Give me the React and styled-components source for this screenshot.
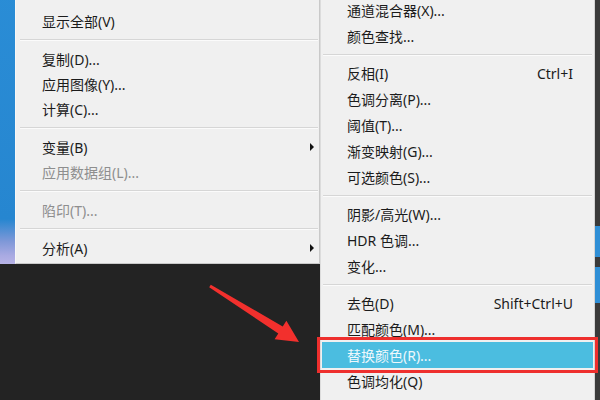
import React from "react";
import styled, { createGlobalStyle } from "styled-components";

const GlobalStyle = createGlobalStyle`
  body {
    margin: 0;
    background: #232323;
  }
`;

const leftItems = [
  { label: "裁切(R)...", lift: 5 },
  { label: "显示全部(V)" },
  { sep: true },
  { label: "复制(D)..." },
  { label: "应用图像(Y)..." },
  { label: "计算(C)..." },
  { sep: true },
  { label: "变量(B)", sub: true },
  { label: "应用数据组(L)...", disabled: true },
  { sep: true },
  { label: "陷印(T)...", disabled: true },
  { sep: true },
  { label: "分析(A)", sub: true },
];

const rightItems = [
  { label: "通道混合器(X)..." },
  { label: "颜色查找..." },
  { sep: true },
  { label: "反相(I)", shortcut: "Ctrl+I" },
  { label: "色调分离(P)..." },
  { label: "阈值(T)..." },
  { label: "渐变映射(G)..." },
  { label: "可选颜色(S)..." },
  { sep: true },
  { label: "阴影/高光(W)..." },
  { label: "HDR 色调..." },
  { label: "变化..." },
  { sep: true },
  { label: "去色(D)", shortcut: "Shift+Ctrl+U" },
  { label: "匹配颜色(M)..." },
  { label: "替换颜色(R)...", active: true },
  { label: "色调均化(Q)" },
];

function MenuList({ items, rowHeight, sepHeight, sepInset, padRight }) {
  return items.map((item, index) =>
    item.sep ? (
      <Separator key={index} $h={sepHeight} $inset={sepInset} />
    ) : (
      <Item
        key={index}
        $h={rowHeight}
        $pr={padRight}
        $disabled={item.disabled}
        $active={item.active}
      >
        <Label $lift={item.lift || 0}>{item.label}</Label>
        {item.shortcut && <Shortcut>{item.shortcut}</Shortcut>}
        {item.sub && <SubArrow />}
      </Item>
    )
  );
}

function App() {
  return (
    <>
      <GlobalStyle />
      <Screen>
        <LeftColumn>
          <Desktop />
          <LeftMenu>
            <MenuList
              items={leftItems}
              rowHeight={25}
              sepHeight={13}
              sepInset="0 1px 0 4px"
              padRight={5}
            />
          </LeftMenu>
        </LeftColumn>
        <RightMenu>
          <MenuList
            items={rightItems}
            rowHeight={26}
            sepHeight={11}
            sepInset="0 2px 0 2px"
            padRight={21}
          />
        </RightMenu>
        <EdgeStrip />
        <Pointer viewBox="0 0 600 400">
          <polygon
            points="210.8,284.7 282.7,326.6 286.4,320.7 299,342 274.6,339.3 278.3,333.4 209.2,287.3"
            fill="#f2302d"
          />
        </Pointer>
      </Screen>
    </>
  );
}

export default App;

const Screen = styled.div`
  position: relative;
  width: 600px;
  height: 400px;
  overflow: hidden;
  display: flex;
  align-items: flex-start;
  background: #232323;
  font-family: "Noto Sans", "Noto Sans CJK SC", sans-serif;
  font-size: 14px;
`;

const LeftColumn = styled.div`
  width: 320px;
  flex-shrink: 0;
  display: flex;
  margin-top: -17px;
`;

const Desktop = styled.div`
  width: 15px;
  flex-shrink: 0;
  background: linear-gradient(
    180deg,
    #2a8dd6 0%,
    #2686d0 84%,
    #7f98d8 92%,
    #a9aae2 97%,
    #b7b3e6 100%
  );
`;

const Menu = styled.div`
  background: #f0f0f0;
  display: flex;
  flex-direction: column;
`;

const LeftMenu = styled(Menu)`
  flex: 1;
  padding-bottom: 3px;
  border-left: 1px solid #f7f7f7;
  border-right: 1px solid #c9c9c9;
  border-bottom: 1px solid #c9c9c9;
`;

const RightMenu = styled(Menu)`
  width: 273px;
  flex-shrink: 0;
  margin-top: -3px;
  height: 420px;
  border-left: 1px solid #dcdcdc;
  border-right: 1px solid #d4d4d4;
`;

const EdgeStrip = styled.div`
  width: 5px;
  height: 400px;
  flex-shrink: 0;
  background: linear-gradient(
    180deg,
    #3a3a3a 0 226px,
    #2f8fd6 226px 257px,
    #3a3a3a 257px 267px,
    #2f8fd6 267px 303px,
    #3a3a3a 303px
  );
`;

const Item = styled.div`
  position: relative;
  display: flex;
  align-items: center;
  height: ${(p) => p.$h}px;
  padding: 0 ${(p) => p.$pr}px 0 26px;
  color: ${(p) => (p.$active ? "#eef8fc" : p.$disabled ? "#8e8e8e" : "#1b1b1b")};
  background: ${(p) => (p.$active ? "#4bbde0" : "transparent")};
  white-space: nowrap;
  ${(p) =>
    p.$active &&
    `
    margin: 0 1px;
    padding-left: 25px;
    outline: 3px solid #ee2f2d;
    outline-offset: 2px;
  `}
`;

const Label = styled.span`
  flex: 1;
  transform: translateY(-${(p) => p.$lift}px);
`;

const Shortcut = styled.span`
  color: #1b1b1b;
`;

const SubArrow = styled.span`
  width: 0;
  height: 0;
  border-top: 4px solid transparent;
  border-bottom: 4px solid transparent;
  border-left: 4px solid #111;
`;

const Separator = styled.div`
  height: ${(p) => p.$h}px;
  display: flex;
  align-items: center;
  padding: ${(p) => p.$inset};

  &::after {
    content: "";
    flex: 1;
    border-top: 1px solid #d6d6d6;
    border-bottom: 1px solid #fbfbfb;
  }
`;

const Pointer = styled.svg`
  position: absolute;
  inset: 0;
  width: 600px;
  height: 400px;
  pointer-events: none;
`;
